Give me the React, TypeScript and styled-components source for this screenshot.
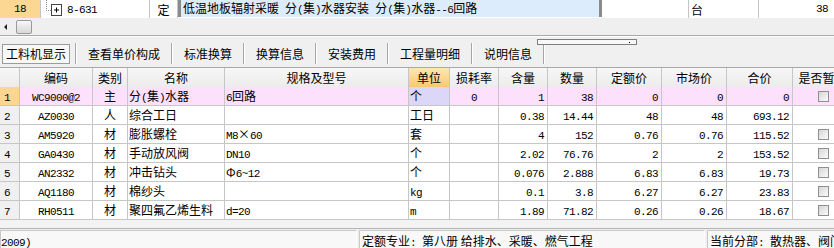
import React from "react";
import styled, { createGlobalStyle } from "styled-components";

const GlobalStyle = createGlobalStyle`
  html, body {
    margin: 0;
    padding: 0;
    overflow: hidden;
    background: #f0f0f0;
  }
  * { box-sizing: border-box; }
`;

const CJK = `"Noto Sans CJK SC", "Noto Sans", sans-serif`;
const MONO = `"Liberation Mono", "DejaVu Sans Mono", monospace`;

const Window = styled.div`
  width: 834px;
  height: 248px;
  overflow: hidden;
  display: flex;
  flex-direction: column;
  background: #f0f0f0;
  font-family: ${CJK};
  font-size: 12px;
  color: #000;
`;

/* ---------- upper grid, last visible row ---------- */

const TopRow = styled.div`
  height: 18px;
  flex: none;
  display: flex;
  background: #fff;
  white-space: nowrap;
`;

const TopCell = styled.div<{ w: number; bg?: string; align?: string }>`
  width: ${({ w }) => w}px;
  flex: none;
  height: 18px;
  line-height: 17px;
  display: flex;
  align-items: center;
  justify-content: ${({ align }) => align || "flex-start"};
  background: ${({ bg }) => bg || "#fff"};
  border-right: 1px solid #c4c4c4;
  padding: 0 4px;
  overflow: hidden;
`;

const EditCell = styled.div`
  width: 424px;
  flex: none;
  height: 17px;
  line-height: 15px;
  background: #ddecfc;
  border-left: 3px solid #8a8a8a;
  border-right: 3px solid #8a8a8a;
  padding: 0 2px;
  overflow: hidden;
  white-space: nowrap;
`;

const TreeText = styled.span`
  margin-left: 4px;
`;

/* ---------- scroll strip ---------- */

const ScrollStrip = styled.div`
  height: 18px;
  flex: none;
  display: flex;
  align-items: center;
  gap: 9px;
  padding-left: 4px;
  background: #efefef;
  border-bottom: 1px solid #a8a8a8;
`;

const Arrow = styled.div`
  width: 0;
  height: 0;
  border-top: 3px solid transparent;
  border-bottom: 3px solid transparent;
  border-right: 3px solid #222;
`;

const Thumb = styled.div`
  width: 16px;
  height: 14px;
  border: 1px solid #9a9a9a;
  border-radius: 2px;
  background: linear-gradient(#f6f6f6, #d8d8d8);
`;

/* ---------- tab bar ---------- */

const TabBar = styled.div`
  height: 31px;
  flex: none;
  display: flex;
  align-items: flex-end;
  padding: 0 0 3px 2px;
  border-top: 1px solid #fff;
  position: relative;
`;

const Tab = styled.div<{ active?: boolean }>`
  height: 20px;
  line-height: 18px;
  padding: ${({ active }) => (active ? "0 3px" : "0 10px")};
  border: 1px solid ${({ active }) => (active ? "#9c9c9c" : "transparent")};
  background: ${({ active }) => (active ? "#f8f8f8" : "transparent")};
  margin-right: ${({ active }) => (active ? "5px" : "0")};
  white-space: nowrap;
`;

const TabSep = styled.div`
  width: 2px;
  height: 21px;
  border-left: 1px solid #a6a6a6;
  border-right: 1px solid #fff;
`;

const Grip = styled.div`
  position: absolute;
  left: 537px;
  top: 2px;
  width: 100px;
  height: 6px;
  border: 1px solid #7e7e7e;
  background: #f8f8f8;

  &::after {
    content: "";
    position: absolute;
    right: 6px;
    top: 2px;
    width: 1px;
    height: 1px;
    background: #000;
  }
`;

/* ---------- material table ---------- */

const COLS = [20, 73, 35, 97, 184, 41, 49, 49, 49, 65, 65, 66, 60];

const Grid = styled.div`
  flex: none;
  display: grid;
  grid-template-columns: ${COLS.map((c) => c + "px").join(" ")};
  grid-auto-rows: 19px;
  width: 853px;
  border-top: 1px solid #a8a8a8;
  background: #fff;
`;

const HeadCell = styled.div<{ hot?: boolean }>`
  height: 21px;
  line-height: 20px;
  text-align: center;
  white-space: nowrap;
  overflow: hidden;
  border-right: 1px solid #c6c6c6;
  border-bottom: 1px solid #c6c6c6;
  background: ${({ hot }) =>
    hot ? "linear-gradient(#fde7b4, #f6c86d)" : "linear-gradient(#f7f7f7, #ebebeb)"};
`;

const Cell = styled.div<{ align?: "left" | "center" | "right"; bg?: string }>`
  height: 19px;
  line-height: 18px;
  white-space: nowrap;
  overflow: hidden;
  text-align: ${({ align }) => align || "left"};
  padding: ${({ align }) => (align === "right" ? "0 3px 0 0" : align === "center" ? "0" : "0 0 0 1px")};
  background: ${({ bg }) => bg || "#fff"};
  border-right: 1px solid #c6c6c6;
  border-bottom: 1px solid #c6c6c6;
`;

const RowNo = styled(Cell)<{ current?: boolean }>`
  padding-left: 4px;
  background: ${({ current }) => (current ? "#fcd690" : "#f0f0f0")};
`;

const CheckCell = styled(Cell)`
  display: flex;
  align-items: center;
  justify-content: center;
`;

const Check = styled.div`
  width: 11px;
  height: 11px;
  border: 1px solid #8f8f8f;
  background: linear-gradient(135deg, #d6d6d6, #fbfbfb);
`;

const Latin = styled.span`
  font-family: ${MONO};
  font-size: 11px;
  letter-spacing: -0.6px;
`;

/* ---------- status bar ---------- */

const Gap = styled.div`
  height: 9px;
  flex: none;
  background: #f3f3f3;
  border-bottom: 1px solid #b4b4b4;
`;

const StatusBar = styled.div`
  flex: 1;
  display: flex;
  gap: 2px;
  padding-top: 1px;
  background: #f0f0f0;
`;

const Panel = styled.div<{ w: number; pad?: number }>`
  width: ${({ w }) => w}px;
  flex: none;
  border-top: 1px solid #c8c8c8;
  border-left: 1px solid #c8c8c8;
  border-right: 1px solid #fff;
  background: #f8f8f8;
  padding: 3px 0 0 ${({ pad }) => pad ?? 2}px;
  white-space: nowrap;
  overflow: hidden;
  line-height: 14px;
`;

/* ---------- data ---------- */

type Mat = {
  code: string;
  kind: string;
  name: string;
  spec: string;
  unit: string;
  loss: string;
  qty: string;
  amount: string;
  quota: string;
  market: string;
  total: string;
  check: boolean;
};

const rows: Mat[] = [
  { code: "WC9000@2", kind: "主", name: "分(集)水器", spec: "6回路", unit: "个", loss: "0", qty: "1", amount: "38", quota: "0", market: "0", total: "0", check: true },
  { code: "AZ0030", kind: "人", name: "综合工日", spec: "", unit: "工日", loss: "", qty: "0.38", amount: "14.44", quota: "48", market: "48", total: "693.12", check: false },
  { code: "AM5920", kind: "材", name: "膨胀螺栓", spec: "M8×60", unit: "套", loss: "", qty: "4", amount: "152", quota: "0.76", market: "0.76", total: "115.52", check: true },
  { code: "GA0430", kind: "材", name: "手动放风阀", spec: "DN10", unit: "个", loss: "", qty: "2.02", amount: "76.76", quota: "2", market: "2", total: "153.52", check: true },
  { code: "AN2332", kind: "材", name: "冲击钻头", spec: "Φ6~12", unit: "个", loss: "", qty: "0.076", amount: "2.888", quota: "6.83", market: "6.83", total: "19.73", check: true },
  { code: "AQ1180", kind: "材", name: "棉纱头", spec: "", unit: "kg", loss: "", qty: "0.1", amount: "3.8", quota: "6.27", market: "6.27", total: "23.83", check: true },
  { code: "RH0511", kind: "材", name: "聚四氟乙烯生料", spec: "d=20", unit: "m", loss: "", qty: "1.89", amount: "71.82", quota: "0.26", market: "0.26", total: "18.67", check: true },
];

const heads = ["", "编码", "类别", "名称", "规格及型号", "单位", "损耗率", "含量", "数量", "定额价", "市场价", "合价", "是否暂估"];
const tabs = ["查看单价构成", "标准换算", "换算信息", "安装费用", "工程量明细", "说明信息"];

// latin runs in the narrow monospace, the rest in the CJK face
const Txt = ({ s }: { s: string }) => {
  const runs = s.match(/[\x20-\x7e]+|[^\x20-\x7e]+/g) || [];
  return (
    <>
      {runs.map((r, i) => (/^[\x20-\x7e]+$/.test(r) ? <Latin key={i}>{r}</Latin> : <span key={i}>{r}</span>))}
    </>
  );
};

const TreeIcon = () => (
  <svg width="18" height="18" viewBox="0 0 18 18">
    <path d="M1.5 0V10.5H6" stroke="#888" strokeDasharray="1 1" fill="none" />
    <rect x="6.5" y="4.5" width="10" height="11" fill="#fff" stroke="#444" />
    <path d="M9 10H14M11.5 7.5V12.5" stroke="#000" />
  </svg>
);

export default function App() {
  return (
    <>
      <GlobalStyle />
      <Window>
        <TopRow>
          <TopCell w={41} bg="#fcd794" align="center">
            <Latin>18</Latin>
          </TopCell>
          <TopCell w={109}>
            <TreeIcon />
            <TreeText>
              <Latin>8-631</Latin>
            </TreeText>
          </TopCell>
          <TopCell w={28} align="center">定</TopCell>
          <EditCell>
            <Txt s="低温地板辐射采暖 分(集)水器安装 分(集)水器--6回路" />
          </EditCell>
          <TopCell w={87} />
          <TopCell w={70} style={{ paddingLeft: 2 }}>台</TopCell>
          <TopCell w={76} align="flex-end" style={{ paddingRight: 6 }}>
            <Latin>38</Latin>
          </TopCell>
        </TopRow>

        <ScrollStrip>
          <Arrow />
          <Thumb />
        </ScrollStrip>

        <TabBar>
          <Grip />
          <Tab active>工料机显示</Tab>
          <TabSep />
          {tabs.map((t) => (
            <React.Fragment key={t}>
              <Tab>{t}</Tab>
              <TabSep />
            </React.Fragment>
          ))}
        </TabBar>

        <Grid>
          {heads.map((h, i) => (
            <HeadCell key={i} hot={h === "单位"}>
              {h}
            </HeadCell>
          ))}
          {rows.map((r, i) => {
            const bg = i === 0 ? "#fde1fc" : undefined;
            return (
              <React.Fragment key={r.code}>
                <RowNo current={i === 0}>
                  <Latin>{i + 1}</Latin>
                </RowNo>
                <Cell align="center" bg={bg}>
                  <Latin>{r.code}</Latin>
                </Cell>
                <Cell align="center" bg={bg}>{r.kind}</Cell>
                <Cell bg={bg}>
                  <Txt s={r.name} />
                </Cell>
                <Cell bg={bg}>
                  <Txt s={r.spec} />
                </Cell>
                <Cell bg={i === 0 ? "#dcd7f8" : undefined}>
                  <Txt s={r.unit} />
                </Cell>
                <Cell align="center" bg={bg}>
                  <Latin>{r.loss}</Latin>
                </Cell>
                {[r.qty, r.amount, r.quota, r.market, r.total].map((v, k) => (
                  <Cell key={k} align="right" bg={bg}>
                    <Latin>{v}</Latin>
                  </Cell>
                ))}
                <CheckCell bg={bg}>{r.check && <Check />}</CheckCell>
              </React.Fragment>
            );
          })}
        </Grid>

        <Gap />

        <StatusBar>
          <Panel w={357} pad={0}>
            <Latin>2009)</Latin>
          </Panel>
          <Panel w={346}>
            定额专业<Latin>: </Latin>第八册 给排水、采暖、燃气工程
          </Panel>
          <Panel w={140}>
            当前分部<Latin>: </Latin>散热器、阀门
          </Panel>
        </StatusBar>
      </Window>
    </>
  );
}
